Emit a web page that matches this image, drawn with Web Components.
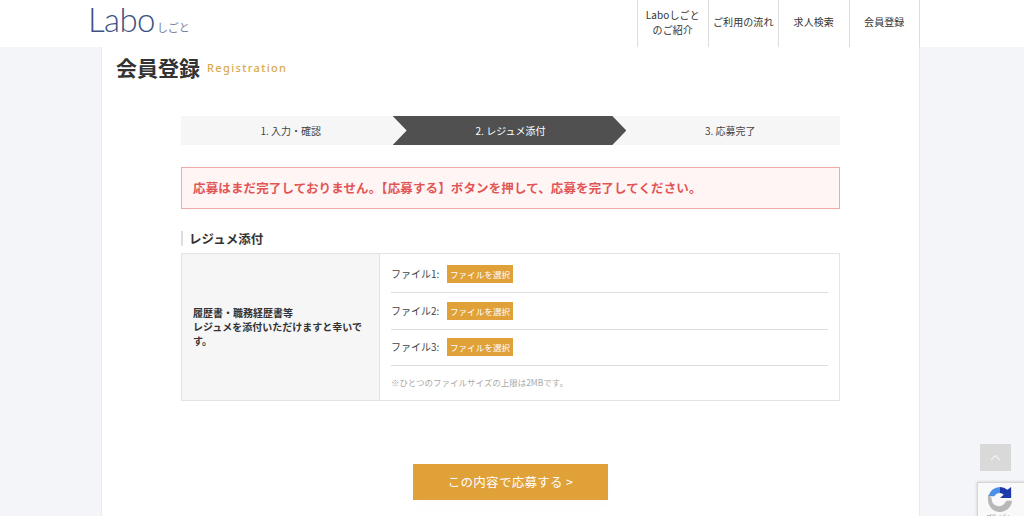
<!DOCTYPE html>
<html lang="ja"><head><meta charset="utf-8"><title>会員登録</title>
<style>
html,body{margin:0;height:516px;overflow:hidden;background:#f3f5f9;}
body{font-family:"Noto Sans CJK JP","Noto Sans",sans-serif;color:#333;}
</style></head><body>
<site-header></site-header>
<page-main>
  <page-title>会員登録<span slot="en">Registration</span></page-title>
  <step-bar></step-bar>
  <notice-box>応募はまだ完了しておりません。【応募する】ボタンを押して、応募を完了してください。</notice-box>
  <section-title>レジュメ添付</section-title>
  <resume-table></resume-table>
  <submit-button>この内容で応募する &gt;</submit-button>
</page-main>
<page-top></page-top>
<recaptcha-badge></recaptcha-badge>
<script>
function def(name, html){
  customElements.define(name, class extends HTMLElement{
    constructor(){super();this.attachShadow({mode:'open'}).innerHTML=html;}
  });
}
def('site-header',`<style>
:host{display:flex;justify-content:space-between;height:47px;background:#fff;padding:0 104px 0 88px;box-sizing:border-box;position:relative;z-index:2}
.logo{display:flex;align-items:baseline;color:#3c5282;height:32px;padding-top:1px}
.logo b{font:300 33px/32px Lato,"Noto Sans",sans-serif;letter-spacing:-.6px;margin-top:2px}
.logo span{font:400 11px/1 "Noto Sans CJK JP",sans-serif;color:#77829b;margin-left:2px;letter-spacing:0}
nav{display:flex;border-left:1px solid #ddd}
a{box-sizing:border-box;width:70.5px;height:47px;padding-bottom:2px;border-right:1px solid #ddd;display:flex;align-items:center;justify-content:center;text-align:center;font-size:10px;line-height:14.5px;color:#333;letter-spacing:.1px}
</style><div class="logo"><b>Labo</b><span>しごと</span></div>
<nav><a>Laboしごと<br>のご紹介</a><a>ご利用の流れ</a><a>求人検索</a><a>会員登録</a></nav>`);
def('page-main',`<style>
:host{display:block;width:819px;height:469px;margin-left:101px;background:#fff;border-left:1px solid #e6ecec;border-right:1px solid #e6ecec;box-sizing:border-box;padding:0 79px;overflow:hidden}
</style><slot></slot>`);
def('page-title',`<style>
:host{display:flex;align-items:center;height:39px;margin:0 0 30px -65px;font-size:21px;font-weight:700;color:#333;box-sizing:border-box}
::slotted(span){font:500 11px/1 "Noto Sans",sans-serif;color:#d9aa4c;letter-spacing:1.35px;margin:2px 0 0 7px}
</style><slot></slot><slot name="en"></slot>`);
def('step-bar',`<style>
:host{display:flex;height:29px;background:#f6f6f6;font-size:10px;color:#444;margin-bottom:22px}
div{flex:1;display:flex;align-items:center;justify-content:center;position:relative;padding-bottom:1px;box-sizing:border-box}
.on{color:#fff}
.on::before{content:"";position:absolute;top:0;bottom:0;left:-8px;right:-6px;background:#505050;clip-path:polygon(0 0,calc(100% - 14px) 0,100% 50%,calc(100% - 14px) 100%,0 100%,14px 50%)}
span{position:relative}
</style><div><span>1. 入力・確認</span></div><div class="on"><span>2. レジュメ添付</span></div><div><span>3. 応募完了</span></div>`);
def('notice-box',`<style>
:host{display:flex;align-items:center;height:42px;box-sizing:border-box;border:1px solid #eeaaaa;background:#fff5f5;color:#e25555;font-size:12.5px;font-weight:700;padding:0 0 2px 11px;letter-spacing:.01em;margin-bottom:22px}
</style><slot></slot>`);
def('section-title',`<style>
:host{display:flex;align-items:center;height:15px;border-left:2px solid #ddd;padding:0 0 1px 6px;box-sizing:border-box;font-size:12.5px;font-weight:700;color:#333;margin-bottom:7px}
</style><slot></slot>`);
def('resume-table',`<style>
:host{display:grid;grid-template-columns:198px 1fr;height:148px;box-sizing:border-box;border:1px solid #e3e3e3;margin-bottom:63px;color:#444}
.l{background:#f6f6f6;border-right:1px solid #e3e3e3;display:flex;align-items:center;padding:0 11px;font-size:10px;font-weight:700;line-height:14px;color:#333}
.r{padding:0 11px}
.row{height:37px;display:flex;align-items:center;border-bottom:1px solid #ddd;font-size:10px;box-sizing:border-box}
.row:first-child{height:39px;padding-top:2px}
.row:nth-child(3){height:36px;padding-bottom:1px}
.row span{width:56px;padding-bottom:1px}
button{all:unset;background:#dfa138;color:#fff;font-size:8.5px;width:66px;height:18px;text-align:center;line-height:18px;letter-spacing:.1px}
p{margin:10px 0 0;font-size:8.5px;color:#aaa;line-height:12px}
</style><div class="l"><div>履歴書・職務経歴書等<br>レジュメを添付いただけますと幸いです。</div></div>
<div class="r"><div class="row"><span>ファイル1:</span><button>ファイルを選択</button></div>
<div class="row"><span>ファイル2:</span><button>ファイルを選択</button></div>
<div class="row"><span>ファイル3:</span><button>ファイルを選択</button></div>
<p>※ひとつのファイルサイズの上限は2MBです。</p></div>`);
def('submit-button',`<style>
:host{display:flex;width:195px;height:36px;padding-bottom:2px;box-sizing:border-box;margin:0 auto;background:#dfa138;color:#fff;align-items:center;justify-content:center;font-size:12.5px;letter-spacing:.3px;box-shadow:0 8px 14px rgba(0,0,0,.012)}
</style><slot></slot>`);
def('page-top',`<style>
:host{position:fixed;left:980px;top:444px;width:31px;height:27px;background:#d9d9d9;display:flex;align-items:center;justify-content:center}
</style><svg width="11" height="7" viewBox="0 0 11 7" fill="none" stroke="#f2f2f2" stroke-width="1.2"><path d="M1 6l4.5-4.5L10 6"/></svg>`);
def('recaptcha-badge',`<style>
:host{position:fixed;left:977px;top:482px;width:60px;height:42px;background:#f9f9f9;border:1px solid #d5d5d5;box-shadow:0 0 3px #ccc;box-sizing:border-box}
svg{position:absolute;left:9px;top:3px}
span{position:absolute;left:0;width:47px;top:29px;text-align:center;font-size:5px;line-height:7px;color:#888;white-space:nowrap}
</style><svg width="26" height="26" viewBox="0 0 28 28" fill="none">
<path d="M14 1A13 13 0 0 0 1.5 11H8A7 7 0 0 1 14 7.5Z" fill="#4a90e8"/>
<path d="M14 1A13 13 0 0 1 22 4L26 1V13H14L18 9.5A7 7 0 0 0 14 7.5Z" fill="#1c3aa9"/>
<path d="M1 9L5 13V14A8 8 0 0 0 18 20L21 16H27A13 13 0 0 1 1 14Z" fill="#b8b8b8"/>
</svg><span>プライバシー</span>`);
</script></body></html>
